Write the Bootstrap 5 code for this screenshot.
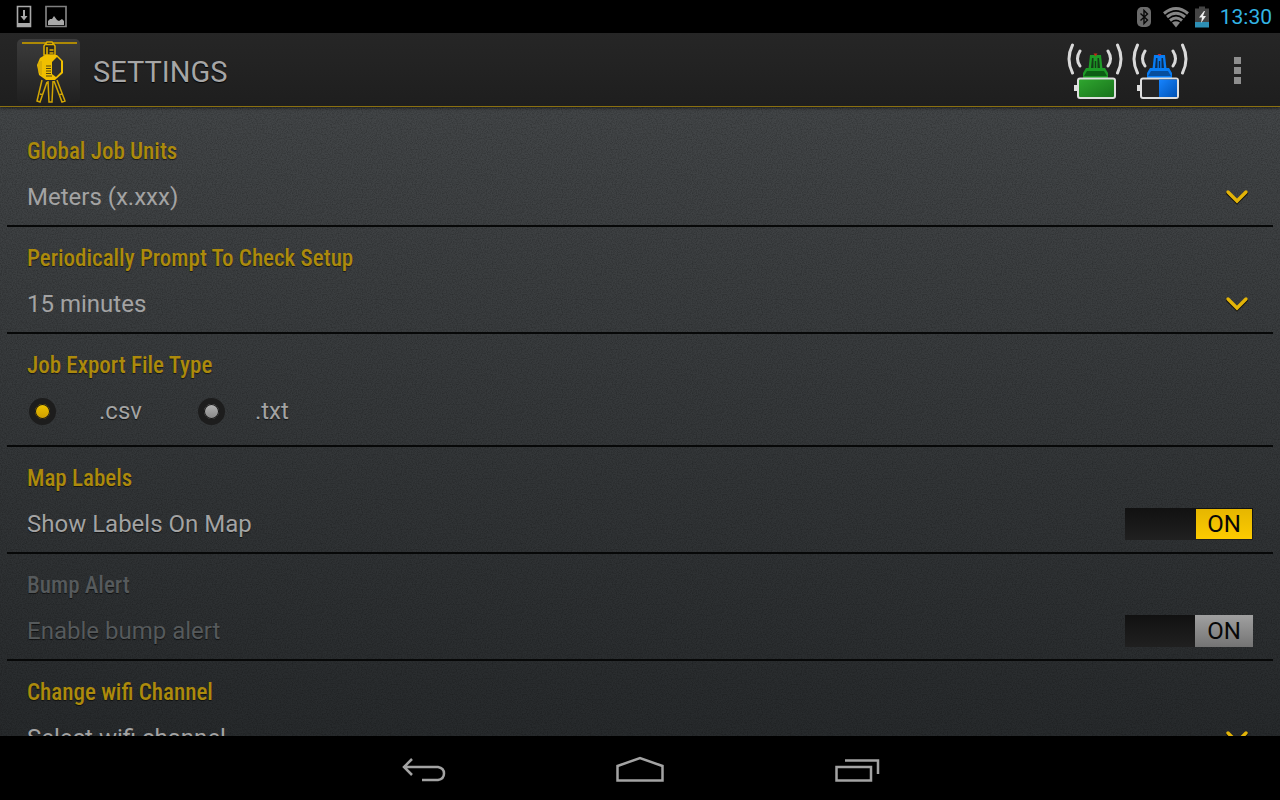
<!DOCTYPE html>
<html lang="en">
<head>
<meta charset="utf-8">
<meta name="viewport" content="width=device-width, initial-scale=1">
<title>Settings</title>
<link rel="stylesheet" href="https://cdn.jsdelivr.net/npm/bootstrap@5.3.0/dist/css/bootstrap.min.css">
<style>
body { font-family: Roboto, "Noto Sans", sans-serif; background: #000; color: #a3a3a3; }
.statusbar { height: 33px; padding: 0 8px 0 16px; background: #000; }
.clock { font-size: 21px; line-height: 32px; color: #33b5e5; }
.actionbar { height: 74px; padding: 2px 27px 0 16px; background: linear-gradient(#262626, #1e1e1e); border-bottom: 1px solid #8a7010; box-shadow: 0 1px 3px rgba(0,0,0,.6); position: relative; }
.actionbar h1 { font-size: 29px; line-height: 40px; font-weight: 400; color: #a6a6a6; text-shadow: 0 1px 1px #000; padding: 2px 0 0 5px; }
.app-logo { width: 64px; height: 66px; }
.sensors { gap: 7px; margin-right: 34px; }
.bare { padding: 0; border: 0; background: none; line-height: 0; }
.pane {
  padding: 13px 7px 0; overflow-y: auto; scrollbar-width: none;
  background:
    url("data:image/svg+xml,%3Csvg xmlns='http://www.w3.org/2000/svg' width='200' height='200'%3E%3Cfilter id='n'%3E%3CfeTurbulence type='fractalNoise' baseFrequency='.8' numOctaves='2' stitchTiles='stitch'/%3E%3CfeColorMatrix values='0 0 0 0 0 0 0 0 0 0 0 0 0 0 0 1.4 0 0 0 -.5'/%3E%3C/filter%3E%3Crect width='200' height='200' filter='url(%23n)' opacity='.34'/%3E%3C/svg%3E"),
    linear-gradient(#434648, #272a2c);
}
.pane::-webkit-scrollbar { display: none; }
.setting { padding: 17px 20px 7px; border-bottom: 2px solid #070808; }
.setting.roomy { padding-bottom: 13px; }
.setting h2, .setting legend { font-family: "Roboto Condensed", "Liberation Sans Narrow", Roboto, sans-serif; font-size: 23px; line-height: 30px; font-weight: 500; color: #ac8a0c; margin: 0 0 9px; text-shadow: 0 1px 1px rgba(0,0,0,.6); }
.line { height: 42px; font-size: 24px; line-height: 42px; text-shadow: 0 1px 1px rgba(0,0,0,.6); }
.setting.off h2, .setting.off .line > label { color: #565a5c; }
.line .form-select {
  height: 42px; padding: 0; border: 0; border-radius: 0; font-size: 24px; line-height: 42px; color: #a3a3a3; background-color: transparent;
  background-image: url("data:image/svg+xml,%3Csvg xmlns='http://www.w3.org/2000/svg' viewBox='0 0 24 18'%3E%3Cpath d='M3 5l9 9 9-9' fill='none' stroke='%23111' stroke-width='4' stroke-linecap='round'/%3E%3Cpath d='M3 4l9 9 9-9' fill='none' stroke='%23e3b408' stroke-width='3.4' stroke-linecap='round'/%3E%3C/svg%3E");
  background-size: 24px 18px; background-position: right 4px center;
}
.radio-dot { appearance: none; width: 27px; height: 27px; margin: 0 0 0 2px; border-radius: 50%; border: 6px solid #1d1d1d; background: linear-gradient(#b5b5b5, #868686); box-shadow: inset 0 0 0 1px #161616; }
.radio-dot:checked { background: linear-gradient(#efc400, #cc9c00); }
.wide-gap { margin-left: 43px; margin-right: 54px; }
.slim-gap { margin-left: 30px; }
.toggle { width: 128px; height: 32px; background: linear-gradient(#111, #202020); }
.toggle span { width: 56px; height: 30px; margin: 1px; line-height: 31px; font-size: 24px; text-align: center; color: #080808; text-shadow: none; background: linear-gradient(#e6b600, #fccb00); }
.off .toggle span { width: 58px; height: 32px; margin: 0; line-height: 33px; background: linear-gradient(#a0a0a0, #747474); }
.softkeys { height: 64px; background: #000; gap: 168px; padding-top: 3px; }
</style>
</head>
<body>
<div class="d-flex flex-column vh-100">
  <header class="flex-shrink-0">
    <div class="statusbar d-flex align-items-center justify-content-between">
      <div class="d-flex align-items-center gap-2">
        <svg width="20" height="24" viewBox="0 0 20 24" aria-label="Download"><path d="M1.500 1.500h13v20h-13z" fill="none" stroke="#a9a9a9" stroke-width="1.600"/><path d="M1 18h14v4H1z" fill="#a9a9a9"/><path d="M8 5v8" stroke="#a9a9a9" stroke-width="2"/><path d="M4.500 11h7L8 15.500z" fill="#a9a9a9"/></svg>
        <svg width="24" height="24" viewBox="0 0 24 24" aria-label="Picture"><path d="M2 1.500h20v20H2z" fill="none" stroke="#808080" stroke-width="1.700"/><path d="M4 20v-4l2-2h2l2-3 3 4 2 1 3-2 2 2v4z" fill="#a9a9a9"/></svg>
      </div>
      <div class="d-flex align-items-center">
        <svg class="me-2" width="18" height="24" viewBox="1 0 18 24" aria-label="Bluetooth"><rect x="2" y="2" width="14" height="20" rx="5" fill="#6b6b6b"/><path d="M5.500 8.500l7 6.500-3.500 3.500V5.500l3.500 3.500-7 6.500" fill="none" stroke="#080808" stroke-width="1.400"/></svg>
        <svg class="me-1" width="28" height="24" viewBox="1 0 28 24" aria-label="Wi-Fi"><g fill="none" stroke="#858585" stroke-width="3"><path d="M3 8.500Q15-1.500 27 8.500"/><path d="M6 12Q15 4.500 24 12"/><path d="M9 15.500Q15 10.500 21 15.500"/></g><path d="M11 17.500q4-2.500 8 0L15 22.500z" fill="#858585"/></svg>
        <svg class="me-2" width="18" height="24" viewBox="0 0 18 24" aria-label="Battery charging"><path d="M5 1.500h6v2h4V17H1V3.500h4z" fill="#444"/><path d="M1 17h14v5.500H1z" fill="#2d8fb5"/><path d="M10 6l-5 6.500h3L7 18l5-7H9l2-5z" fill="#eee"/></svg>
        <time class="clock">13:30</time>
      </div>
    </div>
    <div class="actionbar d-flex align-items-center">
      <svg class="app-logo flex-shrink-0 me-2" viewBox="0 0 64 66" aria-hidden="true">
        <defs><linearGradient id="tile" x2="0" y2="1"><stop stop-color="#3c3c3c"/><stop offset="1" stop-color="#202020"/></linearGradient></defs>
        <rect x="1" y="1" width="63" height="64" rx="5" fill="url(#tile)"/>
        <path d="M6 5h55" stroke="#ad8905" stroke-width="1.800"/>
        <g fill="none" stroke="#d1a504" stroke-width="1.500">
          <path d="M26 42l-5 21 3 1 7-20M32 43l1 21h3l1-21M38 43l8 21 3-1-8-21M24 56l3 1M43 57l3-1"/>
        </g>
        <path d="M28 17V8l3-4h5l3 4v9z" fill="#2c2a20" stroke="#e0b000" stroke-width="1.500"/>
        <path d="M30 6.500h7M31 9v8M33.500 12h4M33.500 15h4" stroke="#e0b000" stroke-width="1.600"/>
        <path d="M29 17h12l6 6v12l-8 7h-9l-7-5-2-10 3-7z" fill="#f0bf00"/>
        <path d="M41 19l-5 5v12l4 3 5-5V23z" fill="#2e2e2e"/>
        <path d="M30 28h5M30 30.500h5M30 33h5M30 35.500h5M30 38h6" stroke="#4e430e" stroke-width="1"/>
        <path d="M23 24v11M25 23v14" stroke="#b18f10" stroke-width=".700"/>
      </svg>
      <h1 class="mb-0 flex-grow-1">SETTINGS</h1>
      <div class="sensors d-flex">
        <svg width="58" height="60" viewBox="0 0 58 60" role="img" aria-label="Green sensor battery full">
          <defs><linearGradient id="gr" x2="1" y2="1"><stop stop-color="#30a830"/><stop offset="1" stop-color="#17701a"/></linearGradient></defs>
          <g fill="none" stroke="#d9d9d9" stroke-width="3" stroke-linecap="round"><path d="M6.500 4Q-.5 18 6.500 32M14 10q-5 8 0 15M51.500 4Q58.500 18 51.500 32M42 10q5 8 0 15"/></g>
          <path d="M24 14h11l1.500 14h-14z" fill="#1d9a26"/><path d="M26 17h1.500v10H25zM31.500 17H33l1 10h-2.500zM28.800 20h1.400v7h-1.400z" fill="#143d17"/><path d="M27.500 12.500h4l-2 3z" fill="#c52c18"/>
          <path d="M20 27h19l3 5v5H17v-5z" fill="#1d9a26"/><path d="M21 30h17l3 5H18z" fill="#0c5d13"/>
          <rect x="12" y="37.500" width="37" height="19.500" rx="2" fill="url(#gr)" stroke="#dedede" stroke-width="2"/><rect x="8" y="44" width="3" height="6" fill="#dedede"/>
        </svg>
        <svg width="58" height="60" viewBox="0 0 58 60" role="img" aria-label="Blue sensor battery half">
          <defs><linearGradient id="bl" x2="1" y2="1"><stop stop-color="#1684ff"/><stop offset="1" stop-color="#0052b5"/></linearGradient></defs>
          <g fill="none" stroke="#d9d9d9" stroke-width="3" stroke-linecap="round"><path d="M6.500 4Q-.5 18 6.500 32M14 10q-5 8 0 15M51.500 4Q58.500 18 51.500 32M42 10q5 8 0 15"/></g>
          <path d="M23 14h11l1.500 14h-14z" fill="#087df5"/><path d="M25 17h1.500v10H24zM30.500 17H32l1 10h-2.500zM27.800 20h1.400v7h-1.400z" fill="#0c2c52"/><path d="M26.500 13h4l-2 2z" fill="#c52c38"/>
          <path d="M19 27h19l3 5v5H16v-5z" fill="#087df5"/><path d="M20 30h17l3 5H17z" fill="#064e9d"/>
          <rect x="10" y="37.500" width="37" height="19.500" rx="2" fill="#242424" stroke="#dedede" stroke-width="2"/><path d="M28 38.500h18V56H28z" fill="url(#bl)"/><rect x="6" y="44" width="3" height="6" fill="#dedede"/>
        </svg>
      </div>
      <button class="bare" type="button" aria-label="More options"><svg width="30" height="48" viewBox="0 0 30 48"><path d="M11 10h7v7h-7zM11 20h7v7h-7zM11 30h7v7h-7z" fill="#8e8e8e"/></svg></button>
    </div>
  </header>

  <main class="pane flex-grow-1">
    <section class="setting">
      <h2><label for="units">Global Job Units</label></h2>
      <div class="line"><select class="form-select shadow-none" id="units"><option>Meters (x.xxx)</option></select></div>
    </section>
    <section class="setting">
      <h2><label for="prompt">Periodically Prompt To Check Setup</label></h2>
      <div class="line"><select class="form-select shadow-none" id="prompt"><option>15 minutes</option></select></div>
    </section>
    <fieldset class="setting roomy">
      <legend>Job Export File Type</legend>
      <div class="line d-flex align-items-center">
        <input class="radio-dot" type="radio" name="filetype" id="csv" checked><label class="wide-gap" for="csv">.csv</label>
        <input class="radio-dot" type="radio" name="filetype" id="txt"><label class="slim-gap" for="txt">.txt</label>
      </div>
    </fieldset>
    <section class="setting">
      <h2>Map Labels</h2>
      <div class="line d-flex align-items-center justify-content-between">
        <label for="labels">Show Labels On Map</label>
        <div><input class="btn-check" type="checkbox" role="switch" id="labels" checked><label class="toggle d-flex justify-content-end" for="labels"><span>ON</span></label></div>
      </div>
    </section>
    <section class="setting off">
      <h2>Bump Alert</h2>
      <div class="line d-flex align-items-center justify-content-between">
        <label for="bump">Enable bump alert</label>
        <div><input class="btn-check" type="checkbox" role="switch" id="bump" checked disabled><label class="toggle d-flex justify-content-end" for="bump"><span>ON</span></label></div>
      </div>
    </section>
    <section class="setting">
      <h2><label for="wifi">Change wifi Channel</label></h2>
      <div class="line"><select class="form-select shadow-none" id="wifi"><option>Select wifi channel</option></select></div>
    </section>
  </main>

  <nav class="softkeys d-flex align-items-center justify-content-center flex-shrink-0" aria-label="System">
    <button class="bare" type="button" aria-label="Back"><svg width="48" height="32" viewBox="0 0 48 32" fill="none" stroke="#a3a3a3" stroke-width="2.500"><path d="M12 5L4 13l8 8M4 13h34q6 1 6 6.500t-6 6.500H22"/></svg></button>
    <button class="bare" type="button" aria-label="Home"><svg width="48" height="32" viewBox="0 0 48 32" fill="none" stroke="#a3a3a3" stroke-width="2.500"><path d="M1.500 12L24 4l22.500 8v14.500h-45z"/></svg></button>
    <button class="bare" type="button" aria-label="Recent apps"><svg width="48" height="32" viewBox="0 0 48 32" fill="none" stroke="#a3a3a3" stroke-width="2.500"><path d="M4.500 13H39v13.500H4.500zM13 6.500h33V20"/></svg></button>
  </nav>
</div>
<script src="https://cdn.jsdelivr.net/npm/bootstrap@5.3.0/dist/js/bootstrap.bundle.min.js"></script>
</body>
</html>
